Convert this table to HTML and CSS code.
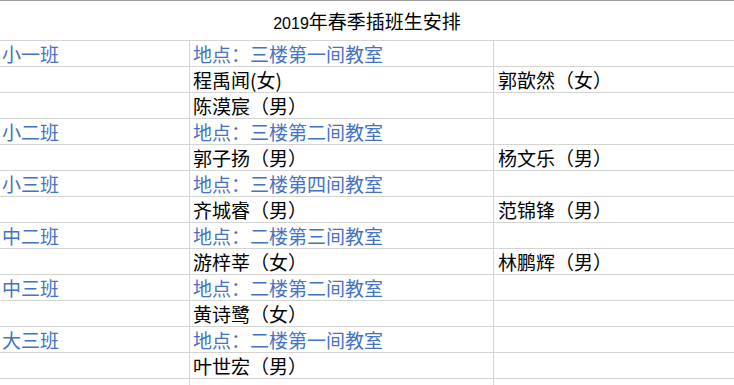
FILE: index.html
```html
<!DOCTYPE html>
<html lang="zh">
<head>
<meta charset="utf-8">
<title>2019年春季插班生安排</title>
<link rel="stylesheet" href="styles.css">
</head>
<body>
<div class="sheet">
  <div class="title"><span class="num">2019</span>年春季插班生安排</div>
  <div class="grid">
    <div class="cell c1 blue">小一班</div><div class="cell c2 blue">地点：三楼第一间教室</div><div class="cell c3"></div>
    <div class="cell c1"></div><div class="cell c2">程禹闻(女)</div><div class="cell c3">郭歆然（女）</div>
    <div class="cell c1"></div><div class="cell c2">陈漠宸（男）</div><div class="cell c3"></div>
    <div class="cell c1 blue">小二班</div><div class="cell c2 blue">地点：三楼第二间教室</div><div class="cell c3"></div>
    <div class="cell c1"></div><div class="cell c2">郭子扬（男）</div><div class="cell c3">杨文乐（男）</div>
    <div class="cell c1 blue">小三班</div><div class="cell c2 blue">地点：三楼第四间教室</div><div class="cell c3"></div>
    <div class="cell c1"></div><div class="cell c2">齐城睿（男）</div><div class="cell c3">范锦锋（男）</div>
    <div class="cell c1 blue">中二班</div><div class="cell c2 blue">地点：二楼第三间教室</div><div class="cell c3"></div>
    <div class="cell c1"></div><div class="cell c2">游梓莘（女）</div><div class="cell c3">林鹏辉（男）</div>
    <div class="cell c1 blue">中三班</div><div class="cell c2 blue">地点：二楼第二间教室</div><div class="cell c3"></div>
    <div class="cell c1"></div><div class="cell c2">黄诗鹭（女）</div><div class="cell c3"></div>
    <div class="cell c1 blue">大三班</div><div class="cell c2 blue">地点：二楼第一间教室</div><div class="cell c3"></div>
    <div class="cell c1"></div><div class="cell c2">叶世宏（男）</div><div class="cell c3"></div>
    <div class="cell c1 tail"></div><div class="cell c2 tail"></div><div class="cell c3 tail"></div>
  </div>
</div>
</body>
</html>
```
FILE: styles.css
```css
html, body {
  margin: 0;
  padding: 0;
  background: #ffffff;
  overflow: hidden;
}
body {
  width: 734px;
  height: 385px;
  font-family: "Noto Sans CJK SC", "Noto Sans", sans-serif;
  font-size: 19px;
  color: #000000;
}
.sheet {
  border-top: 1px solid #a0a0a0;
}
.title {
  height: 39px;
  line-height: 39px;
  text-align: center;
  border-bottom: 1px solid #d4d4d4;
  font-size: 19px;
}
.num {
  font-family: "Liberation Sans", sans-serif;
  font-size: 16px;
}
.grid {
  display: grid;
  grid-template-columns: 190px 304px 1fr;
  grid-template-rows: repeat(13, 26px) 6px;
}
.cell {
  box-sizing: border-box;
  border-bottom: 1px solid #d4d4d4;
  line-height: 25px;
  padding-left: 2px;
  white-space: nowrap;
  overflow: hidden;
}
.tail {
  border-bottom: none;
}
.c1, .c2 {
  border-right: 1px solid #d4d4d4;
}
.c2 {
  padding-left: 3px;
}
.c3 {
  padding-left: 4px;
}
.blue {
  color: #4472c4;
}
```
